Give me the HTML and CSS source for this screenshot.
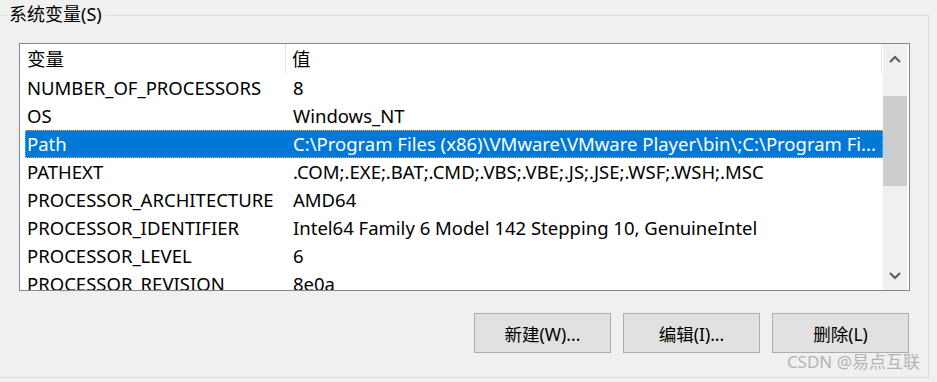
FILE: index.html
```html
<!DOCTYPE html>
<html lang="zh-CN">
<head>
    <meta charset="UTF-8">
    <title>系统变量</title>
    <link rel="stylesheet" href="styles.css">
</head>
<body>
    <div class="group">
        <span class="group-title">系统变量(S)</span>

        <div class="listbox">
            <div class="list">
                <div class="head">
                    <div class="hcell name">变量</div>
                    <div class="hcell value">值</div>
                </div>
                <div class="row"><span>NUMBER_OF_PROCESSORS</span><span>8</span></div>
                <div class="row"><span>OS</span><span>Windows_NT</span></div>
                <div class="row selected"><span>Path</span><span>C:\Program Files (x86)\VMware\VMware Player\bin\;C:\Program Fi...</span></div>
                <div class="row"><span>PATHEXT</span><span>.COM;.EXE;.BAT;.CMD;.VBS;.VBE;.JS;.JSE;.WSF;.WSH;.MSC</span></div>
                <div class="row"><span>PROCESSOR_ARCHITECTURE</span><span>AMD64</span></div>
                <div class="row"><span>PROCESSOR_IDENTIFIER</span><span>Intel64 Family 6 Model 142 Stepping 10, GenuineIntel</span></div>
                <div class="row"><span>PROCESSOR_LEVEL</span><span>6</span></div>
                <div class="row"><span>PROCESSOR_REVISION</span><span>8e0a</span></div>
            </div>
            <div class="scroll">
                <div class="arrow up">
                    <svg width="12" height="8" viewBox="0 0 12 8"><path d="M1 7 L6 2 L11 7" fill="none" stroke="#606060" stroke-width="2.2"/></svg>
                </div>
                <div class="track">
                    <div class="thumb"></div>
                </div>
                <div class="arrow down">
                    <svg width="12" height="8" viewBox="0 0 12 8"><path d="M1 1 L6 6 L11 1" fill="none" stroke="#606060" stroke-width="2.2"/></svg>
                </div>
            </div>
        </div>

        <div class="buttons">
            <button class="btn">新建(W)...</button>
            <button class="btn">编辑(I)...</button>
            <button class="btn">删除(L)</button>
        </div>

        <span class="watermark">CSDN @易点互联</span>
    </div>
</body>
</html>
```

FILE: styles.css
```css
*{
    margin: 0;
    padding: 0;
    box-sizing: border-box;
}
body{
    background-color: #f0f0f0;
    font-family: "Noto Sans", "Noto Sans CJK SC", sans-serif;
    font-size: 18.5px;
    color: #000;
    overflow: hidden;
}
.group{
    position: relative;
    margin: 15px 0 0 -10px;
    width: 939px;
    height: 363px;
    border: 1px solid #dcdcdc;
    padding: 27px 0 0 28px;
}
.group-title{
    position: absolute;
    top: -14px;
    left: 16px;
    padding: 0 3px 0 2px;
    background-color: #f0f0f0;
    line-height: 24px;
    font-size: 18px;
}
.listbox{
    display: flex;
    width: 891px;
    height: 248px;
    border: 1px solid #828790;
    background-color: #fff;
    padding-right: 2px;
}
.list{
    flex: 1;
    overflow: hidden;
}
.head{
    display: flex;
    height: 30px;
}
.hcell{
    line-height: 30px;
    padding-left: 7px;
}
.hcell.name{
    width: 266px;
    border-right: 1px solid #e5e5e5;
}
.hcell.value{
    flex: 1;
    padding-left: 6px;
    border-right: 1px solid #e5e5e5;
    margin-right: 1px;
}
.row{
    display: grid;
    grid-template-columns: 266px 1fr;
    height: 28px;
    line-height: 28px;
    margin-left: 5px;
    white-space: nowrap;
}
.row span{
    padding-left: 2px;
    overflow: hidden;
}
.row.selected{
    background-color: #0078d7;
    color: #fff;
    outline: 1px dotted #f5a14a;
    outline-offset: -1px;
}
.scroll{
    width: 24px;
    background-color: #f0f0f0;
    display: flex;
    flex-direction: column;
}
.arrow{
    display: flex;
    justify-content: center;
    align-items: center;
}
.arrow.up{
    height: 30px;
}
.arrow.down{
    height: 28px;
}
.track{
    flex: 1;
}
.thumb{
    margin-top: 22px;
    height: 90px;
    background-color: #cdcdcd;
}
.buttons{
    display: flex;
    justify-content: flex-end;
    gap: 12px;
    width: 890px;
    margin-top: 22px;
}
.btn{
    width: 137px;
    height: 40px;
    background-color: #e1e1e1;
    border: 1px solid #adadad;
    font-family: "Noto Sans", "Noto Sans CJK SC", sans-serif;
    font-size: 17.5px;
    color: #000;
}
.watermark{
    position: absolute;
    right: 8px;
    bottom: 4px;
    font-size: 17px;
    color: #b4b4b4;
    font-family: "Noto Sans", "Noto Sans CJK SC", sans-serif;
}
```
